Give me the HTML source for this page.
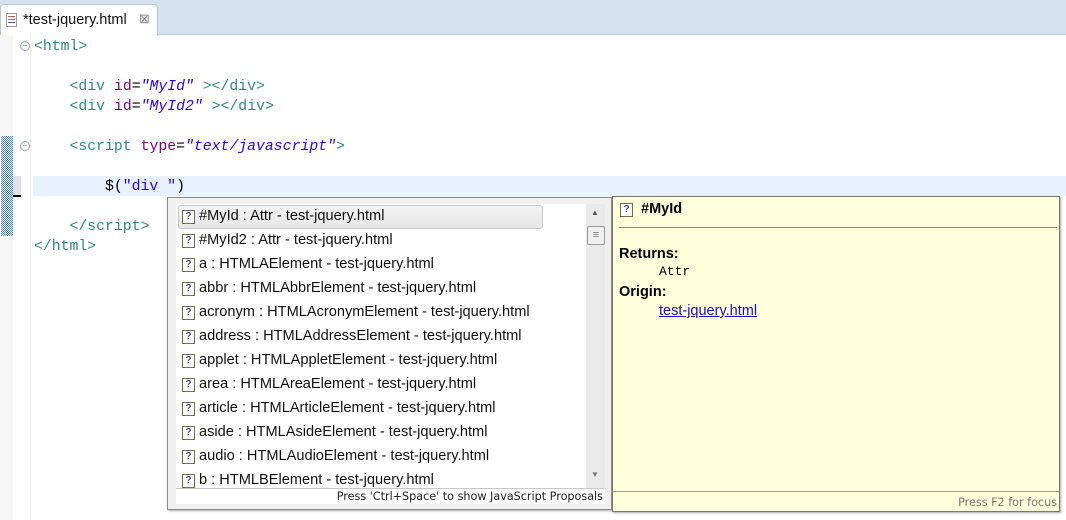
<!DOCTYPE html>
<html><head><meta charset="utf-8"><style>
body{margin:0;width:1066px;height:520px;overflow:hidden;background:#fff;font-family:"Liberation Sans",sans-serif;position:relative}
.abs{position:absolute}
.code{font-family:"Liberation Mono",monospace;font-size:14.8px;white-space:pre;line-height:20px}
.t{color:#2a8a8a}.a{color:#7f007f}.s{color:#2a00ff;font-style:italic}
.item{position:absolute;left:6px;height:22px;line-height:22px;font-size:14.6px;color:#111;white-space:nowrap}
.q{display:inline-block;width:11px;height:12px;border:1px solid #7a6a4a;background:#fff;color:#2d4f8a;font-size:10px;font-weight:bold;line-height:12px;text-align:center;vertical-align:1px;margin-right:4px;font-family:"Liberation Sans",sans-serif}
</style></head><body>
<div class="abs" style="left:0;top:0;width:1066px;height:34px;background:#d6e2ef;border-bottom:1px solid #b7c7d9"></div>
<div class="abs" style="left:0;top:4px;width:156px;height:31px;background:#fff;border:1px solid #b7c7d9;border-bottom:none;border-radius:4px 4px 0 0"></div>
<div class="abs" style="left:6px;top:13px;width:9px;height:12px;border:1px solid #999;background:#fff"><div style="margin:2px 1px;height:1px;background:#c55;box-shadow:0 3px #5a5,0 6px #55a"></div></div>
<div class="abs" style="left:23px;top:12px;font-size:14.5px;color:#111">*test-jquery.html</div>
<div class="abs" style="left:139px;top:11px;font-size:13px;color:#888">⊠</div>
<div class="abs" style="left:0;top:35px;width:13px;height:485px;background:#f6f6f6"></div>
<div class="abs" style="left:1px;top:136px;width:12px;height:100px;background:repeating-conic-gradient(#3a7fe0 0 25%,#fff 0 50%) 0 0/2px 2px"></div>
<div class="abs" style="left:13px;top:176px;width:8px;height:20px;background:#e8dcec"></div>
<div class="abs" style="left:13px;top:195px;width:8px;height:2px;background:#000"></div>
<div class="abs" style="left:30px;top:35px;width:1px;height:485px;background:#eee"></div>
<div class="abs" style="left:20px;top:41px;width:8px;height:8px;border:1px solid #9ab;border-radius:50%;font-size:8px;line-height:8px;text-align:center;color:#678">−</div>
<div class="abs" style="left:20px;top:141px;width:8px;height:8px;border:1px solid #9ab;border-radius:50%;font-size:8px;line-height:8px;text-align:center;color:#678">−</div>
<div class="abs" style="left:33px;top:176px;width:1033px;height:20px;background:#e8f2fe"></div>
<div class="abs code" style="left:34px;top:37px"><span class="t">&lt;html&gt;</span>

    <span class="t">&lt;div</span> <span class="a">id</span>=<span class="s">"MyId"</span> <span class="t">&gt;&lt;/div&gt;</span>
    <span class="t">&lt;div</span> <span class="a">id</span>=<span class="s">"MyId2"</span> <span class="t">&gt;&lt;/div&gt;</span>

    <span class="t">&lt;script</span> <span class="a">type</span>=<span class="s">"text/javascript"</span><span class="t">&gt;</span>

        $(<span style="color:#2a00ff">"div "</span>)

    <span class="t">&lt;/script&gt;</span>
<span class="t">&lt;/html&gt;</span></div>

<div class="abs" style="left:167px;top:197px;width:443px;height:311px;background:#f0f0f0;border:1px solid #8a8a8a;box-shadow:1px 1px 2px #aaa"></div>
<div class="abs" style="left:176px;top:204px;width:410px;height:284px;background:#fff;overflow:hidden">
<div class="abs" style="left:2px;top:1px;width:363px;height:22px;background:linear-gradient(#f4f4f4,#e6e6e6);border:1px solid #c8c8c8;border-radius:3px"></div>
<div class="item" style="top:1px"><span class="q">?</span>#MyId : Attr - test-jquery.html</div>
<div class="item" style="top:25px"><span class="q">?</span>#MyId2 : Attr - test-jquery.html</div>
<div class="item" style="top:49px"><span class="q">?</span>a : HTMLAElement - test-jquery.html</div>
<div class="item" style="top:73px"><span class="q">?</span>abbr : HTMLAbbrElement - test-jquery.html</div>
<div class="item" style="top:97px"><span class="q">?</span>acronym : HTMLAcronymElement - test-jquery.html</div>
<div class="item" style="top:121px"><span class="q">?</span>address : HTMLAddressElement - test-jquery.html</div>
<div class="item" style="top:145px"><span class="q">?</span>applet : HTMLAppletElement - test-jquery.html</div>
<div class="item" style="top:169px"><span class="q">?</span>area : HTMLAreaElement - test-jquery.html</div>
<div class="item" style="top:193px"><span class="q">?</span>article : HTMLArticleElement - test-jquery.html</div>
<div class="item" style="top:217px"><span class="q">?</span>aside : HTMLAsideElement - test-jquery.html</div>
<div class="item" style="top:241px"><span class="q">?</span>audio : HTMLAudioElement - test-jquery.html</div>
<div class="item" style="top:265px"><span class="q">?</span>b : HTMLBElement - test-jquery.html</div>
</div>
<div class="abs" style="left:586px;top:204px;width:19px;height:284px;background:#eaeaea"></div>
<div class="abs" style="left:591px;top:208px;font-size:8px;color:#555">▲</div>
<div class="abs" style="left:591px;top:470px;font-size:8px;color:#777">▼</div>
<div class="abs" style="left:587px;top:226px;width:16px;height:17px;background:#f0f0f0;border:1px solid #999;border-radius:2px;font-size:11px;line-height:16px;text-align:center;color:#777">≡</div>
<div class="abs" style="left:176px;top:488px;width:430px;height:1px;background:#c8c8c8"></div>
<div class="abs" style="left:176px;top:489px;width:429px;height:15px;background:#fff"></div>
<div class="abs" style="left:300px;top:488px;width:303px;text-align:right;font-family:'DejaVu Sans',sans-serif;font-size:11.2px;line-height:17px;color:#222">Press 'Ctrl+Space' to show JavaScript Proposals</div>

<div class="abs" style="left:612px;top:196px;width:446px;height:314px;background:#ffffdc;border:1px solid #777;box-shadow:1px 1px 2px #aaa"></div>
<div class="abs" style="left:620px;top:201px;font-size:14.5px;font-weight:bold;color:#000"><span class="q">?</span> #MyId</div>
<div class="abs" style="left:619px;top:227px;width:438px;height:1px;background:#888"></div>
<div class="abs" style="left:619px;top:246px;font-size:14.5px;font-weight:bold">Returns:</div>
<div class="abs" style="left:659px;top:264px;font-family:'Liberation Mono',monospace;font-size:13px">Attr</div>
<div class="abs" style="left:619px;top:284px;font-size:14.5px;font-weight:bold">Origin:</div>
<div class="abs" style="left:659px;top:303px;font-size:14.5px;color:#1a0dcc;text-decoration:underline">test-jquery.html</div>
<div class="abs" style="left:613px;top:491px;width:446px;height:1px;background:#999"></div>
<div class="abs" style="left:700px;top:494px;width:357px;text-align:right;font-family:'DejaVu Sans',sans-serif;font-size:11.2px;line-height:18px;color:#777">Press F2 for focus</div>
</body></html>
